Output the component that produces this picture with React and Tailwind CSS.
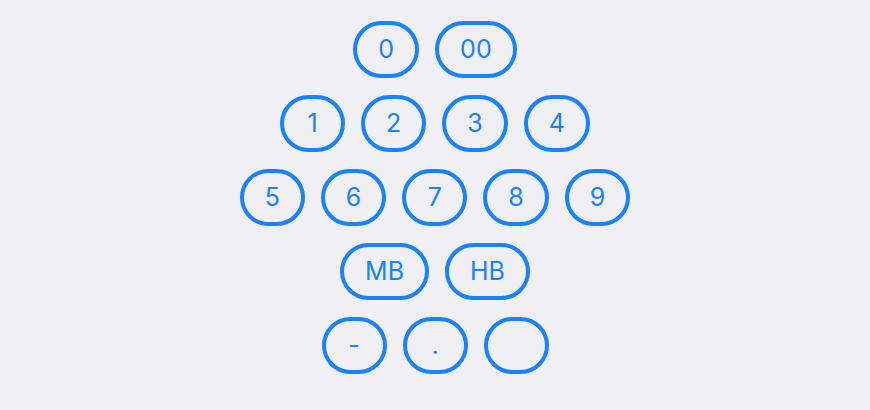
import React from "react";

const rows = [
  ["0", "00"],
  ["1", "2", "3", "4"],
  ["5", "6", "7", "8", "9"],
  ["MB", "HB"],
  ["-", ".", ""],
];

function Key({ label }) {
  return (
    <button
      type="button"
      className="h-[57px] min-w-[65px] px-[21px] rounded-full border-4 border-[#1a82fb] bg-transparent text-[#1a82fb] text-[25px] font-normal leading-none flex items-center justify-center"
      style={{ fontFamily: "Inter, 'Noto Sans', sans-serif" }}
    >
      {label}
    </button>
  );
}

export default function App() {
  return (
    <div className="w-[870px] h-[410px] bg-[#efeff4] flex flex-col items-center pt-[21px] gap-[17px]">
      {rows.map((row, i) => (
        <div key={i} className="flex gap-[16px]">
          {row.map((k, j) => (
            <Key key={j} label={k} />
          ))}
        </div>
      ))}
    </div>
  );
}
